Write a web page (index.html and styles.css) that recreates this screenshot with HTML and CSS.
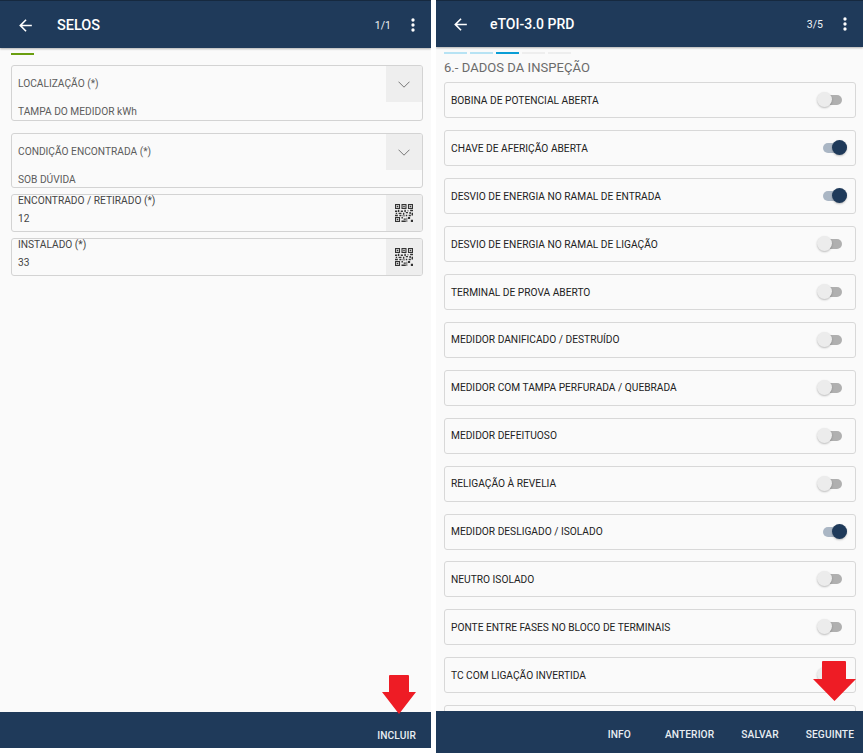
FILE: index.html
```html
<!DOCTYPE html>
<html lang="pt">
<head>
<meta charset="utf-8">
<title>eTOI</title>
<link rel="stylesheet" href="styles.css">
</head>
<body>
<svg class="defs" width="0" height="0" aria-hidden="true">
<symbol id="qr" viewBox="0 0 25 25">
<path fill="#333" d="M0 0h7v7H0zM9 0h7v7H9zM18 0h7v7h-7zM0 18h7v7H0zM18 18h3v3h-3zM22 22h3v3h-3zM9 18h2v2H9zM12 20h3v2h-3zM9 23h6v2H9zM16 19h1v6h-1zM0 9h3v2H0zM4 8h2v3H4zM8 9h3v2H8zM13 8h2v3h-2zM17 9h2v1h-2zM21 8h4v2h-4zM1 12h2v2H1zM5 12h4v2H5zM11 12h2v3h-2zM15 11h3v2h-3zM20 11h2v3h-2zM23 12h2v4h-2zM0 15h4v2H0zM6 15h3v2H6zM10 16h4v1h-4zM15 15h2v2h-2zM19 15h3v2h-3z"/>
<path fill="#ddd" d="M1.500 1.500h4v4h-4zM10.500 1.500h4v4h-4zM19.500 1.500h4v4h-4zM1.500 19.500h4v4h-4z"/>
<path fill="#333" d="M2.500 2.500h2v2h-2zM11.500 2.500h2v2h-2zM20.500 2.500h2v2h-2zM2.500 20.500h2v2h-2z"/>
</symbol>
<symbol id="back" viewBox="0 0 24 24"><path fill="#fff" d="M20 11H7.830l5.590-5.590L12 4l-8 8 8 8 1.410-1.410L7.830 13H20z"/></symbol>
<symbol id="more" viewBox="0 0 24 24"><path fill="#fff" d="M12 8a2 2 0 1 0 0-4 2 2 0 0 0 0 4zm0 2a2 2 0 1 0 0 4 2 2 0 0 0 0-4zm0 6a2 2 0 1 0 0 4 2 2 0 0 0 0-4z"/></symbol>
<symbol id="chev" viewBox="0 0 12 7"><path fill="none" stroke="#777" stroke-width="1" d="M.5.700l5.500 5.500 5.500-5.500"/></symbol>
</svg>

<main class="screens">
<section class="screen screen-left">
  <header class="appbar">
    <svg class="icon-back"><use href="#back"/></svg>
    <h1 class="title">SELOS</h1>
    <span class="pager">1/1</span>
    <svg class="icon-more"><use href="#more"/></svg>
  </header>
  <div class="content content-left">
    <div class="steps"><span class="step step-green"></span></div>
    <div class="form">
      <div class="field select">
        <div class="select-top"><span class="label">LOCALIZAÇÃO (*)</span><span class="side side-select"><svg class="chev"><use href="#chev"/></svg></span></div>
        <div class="value">TAMPA DO MEDIDOR kWh</div>
      </div>
      <div class="field select select-2">
        <div class="select-top"><span class="label">CONDIÇÃO ENCONTRADA (*)</span><span class="side side-select"><svg class="chev"><use href="#chev"/></svg></span></div>
        <div class="value">SOB DÚVIDA</div>
      </div>
      <div class="field input">
        <div class="input-text"><span class="label-dark">ENCONTRADO / RETIRADO (*)</span><span class="value-dark">12</span></div>
        <span class="side"><svg class="qr"><use href="#qr"/></svg></span>
      </div>
      <div class="field input">
        <div class="input-text"><span class="label-dark">INSTALADO (*)</span><span class="value-dark">33</span></div>
        <span class="side"><svg class="qr"><use href="#qr"/></svg></span>
      </div>
    </div>
  </div>
  <footer class="bottombar"><span class="action">INCLUIR</span></footer>
</section>

<section class="screen screen-right">
  <header class="appbar appbar-right">
    <svg class="icon-back"><use href="#back"/></svg>
    <h1 class="title">eTOI-3.0 PRD</h1>
    <span class="pager">3/5</span>
    <svg class="icon-more"><use href="#more"/></svg>
  </header>
  <div class="content content-right">
    <div class="steps"><span class="step step-done"></span><span class="step step-done"></span><span class="step step-active"></span><span class="step step-todo"></span><span class="step step-todo"></span></div>
    <h2 class="section-title">6.- DADOS DA INSPEÇÃO</h2>
    <ul class="rows">
      <li class="row"><span>BOBINA DE POTENCIAL ABERTA</span><span class="toggle"></span></li>
      <li class="row"><span>CHAVE DE AFERIÇÃO ABERTA</span><span class="toggle on"></span></li>
      <li class="row"><span>DESVIO DE ENERGIA NO RAMAL DE ENTRADA</span><span class="toggle on"></span></li>
      <li class="row"><span>DESVIO DE ENERGIA NO RAMAL DE LIGAÇÃO</span><span class="toggle"></span></li>
      <li class="row"><span>TERMINAL DE PROVA ABERTO</span><span class="toggle"></span></li>
      <li class="row"><span>MEDIDOR DANIFICADO / DESTRUÍDO</span><span class="toggle"></span></li>
      <li class="row"><span>MEDIDOR COM TAMPA PERFURADA / QUEBRADA</span><span class="toggle"></span></li>
      <li class="row"><span>MEDIDOR DEFEITUOSO</span><span class="toggle"></span></li>
      <li class="row"><span>RELIGAÇÃO À REVELIA</span><span class="toggle"></span></li>
      <li class="row"><span>MEDIDOR DESLIGADO / ISOLADO</span><span class="toggle on"></span></li>
      <li class="row"><span>NEUTRO ISOLADO</span><span class="toggle"></span></li>
      <li class="row"><span>PONTE ENTRE FASES NO BLOCO DE TERMINAIS</span><span class="toggle"></span></li>
      <li class="row"><span>TC COM LIGAÇÃO INVERTIDA</span><span class="toggle"></span></li>
      <li class="row"></li>
    </ul>
  </div>
  <footer class="bottombar bottombar-right">
    <span class="action action-info">INFO</span><span class="action">ANTERIOR</span><span class="action">SALVAR</span><span class="action">SEGUINTE</span>
  </footer>
</section>
</main>

<svg class="arrow arrow-left" viewBox="0 0 34 39" aria-hidden="true"><path fill="#ee1c25" d="M7 1q0-1 1-1h18q1 0 1 1v16h7L17 39 0 17h7z"/></svg>
<svg class="arrow arrow-right" viewBox="0 0 43 40" aria-hidden="true"><path fill="#ee1c25" d="M9 1q0-1 1-1h22q1 0 1 1v17h10L21.500 40 0 18h9z"/></svg>
</body>
</html>
```
FILE: styles.css
```css
* { box-sizing: border-box; }
html, body { margin: 0; padding: 0; height: 755px; overflow: hidden; background: #fff; }
body { font-family: Roboto, "Liberation Sans", sans-serif; position: relative; }
.defs { position: absolute; }

.screens { display: flex; gap: 5px; height: 755px; align-items: flex-start; }
.screen { display: flex; flex-direction: column; background: #fafafa; overflow: hidden; }
.screen-left { width: 431px; height: 748px; }
.screen-right { width: 427px; height: 753px; }

.appbar { flex: none; height: 48px; display: flex; align-items: center; padding: 1px 8px 0 16px; background: #1f3a5a; border-top: 1px solid #16293f; color: #fff; box-shadow: 0 1px 2px rgba(0,0,0,.3); position: relative; z-index: 1; }
.appbar-right { height: 47px; padding: 0 8px 0 15px; }
.icon-back { width: 19px; height: 19px; flex: none; }
.icon-more { width: 20px; height: 20px; flex: none; margin-left: 12px; }
.title { flex: 1; margin: 0 0 0 22px; font-size: 14.500px; font-weight: 500; color: #fff; }
.appbar-right .title { font-size: 14px; margin-left: 20px; }
.pager { font-size: 10.500px; color: #f0f3f6; }

.content { flex: 1; min-height: 0; overflow: hidden; }
.content-left { padding: 5px 8px 0 11px; }
.content-right { padding: 5px 7px 0 8px; }

.steps { display: flex; gap: 3px; height: 2px; }
.step { width: 23px; height: 2px; }
.step-green { background: #6a9e10; }
.step-done { background: #b7e3f4; }
.step-active { background: #0a9ed6; }
.step-todo { background: #eeeeee; }

.form { margin-top: 10px; display: flex; flex-direction: column; gap: 6px; }
.field { border: 1px solid #d3d3d3; border-radius: 3px; background: #fafafa; overflow: hidden; }
.select { height: 56px; }
.select-2 { margin-top: 6px; height: 55px; }
.select-top { height: 36px; display: flex; align-items: center; justify-content: space-between; padding-left: 6px; }
.label { font-size: 10.200px; color: #5c5c5c; margin-top: -2px; }
.value { margin-top: 3px; padding-left: 6px; font-size: 10.200px; line-height: 14px; color: #5c5c5c; }
.side { width: 36px; align-self: stretch; flex: none; background: #eeeeee; display: flex; align-items: center; justify-content: center; }
.side-select { height: 36px; }
.chev { width: 12px; height: 7px; }

.input { height: 38px; display: flex; justify-content: space-between; }
.input-text { display: flex; flex-direction: column; padding-left: 6px; }
.label-dark { font-size: 10.200px; line-height: 12px; color: #444; margin-top: 0; }
.value-dark { font-size: 10.200px; line-height: 14px; color: #444; margin-top: 5px; }
.qr { width: 18px; height: 18px; }

.section-title { margin: 6px 0 0; font-size: 13px; line-height: 16px; font-weight: 400; color: #6b6b6b; letter-spacing: .05px; }
.rows { list-style: none; margin: 6.400px 0 0; padding: 0; display: flex; flex-direction: column; gap: 11.920px; }
.row { height: 36px; flex: none; display: flex; align-items: center; justify-content: space-between; padding: 0 8px 0 6px; border: 1px solid #d8d8d8; border-radius: 3px; background: #fafafa; font-size: 10.200px; color: #222; }

.toggle { position: relative; width: 24px; height: 10px; margin-right: 5px; border-radius: 5px; background: #b0b0b0; }
.toggle::after { content: ""; position: absolute; left: -1px; top: -3px; width: 15px; height: 15px; border-radius: 50%; background: #ececec; box-shadow: 0 1px 2px rgba(0,0,0,.25); }
.toggle.on { background: #aab6c4; margin-right: 0; }
.toggle.on::after { left: 9px; background: #1f3a5a; }

.bottombar { flex: none; height: 36px; display: flex; align-items: center; justify-content: flex-end; padding: 10px 15px 0 0; background: #1f3a5a; position: relative; z-index: 1; }
.bottombar-right { height: 42px; gap: 27px; padding: 4px 9px 0 0; }
.action { font-size: 10.200px; font-weight: 500; color: #e8edf2; letter-spacing: .1px; }
.action-info { margin-right: 7px; }

.arrow { position: absolute; z-index: 2; }
.arrow-left { left: 382px; top: 675px; width: 34px; height: 39px; }
.arrow-right { left: 813px; top: 661px; width: 43px; height: 40px; }
```
